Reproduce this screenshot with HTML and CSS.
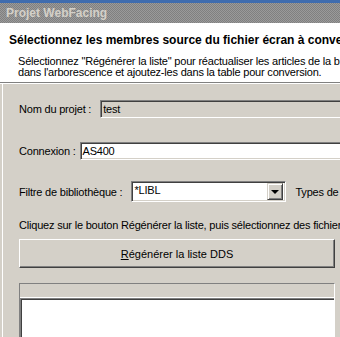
FILE: index.html
```html
<!DOCTYPE html>
<html lang="fr">
<head>
    <meta charset="UTF-8" />
    <title>Projet WebFacing</title>
    <link rel="stylesheet" href="styles.css">
</head>
<body>

<div class="window">
    <div class="caption">Projet WebFacing</div>

    <div class="banner">
        <h1>Sélectionnez les membres source du fichier écran à convertir</h1>
        <p>Sélectionnez "Régénérer la liste" pour réactualiser les articles de la bibliothèque</p>
        <p>dans l'arborescence et ajoutez-les dans la table pour conversion.</p>
    </div>

    <div class="content">
        <div class="row row-project">
            <span class="label">Nom du projet :</span>
            <div class="field disabled">test</div>
        </div>

        <div class="row row-conn">
            <span class="label">Connexion :</span>
            <div class="field">AS400</div>
        </div>

        <div class="row row-filter">
            <span class="label">Filtre de bibliothèque :</span>
            <div class="combo">
                <span class="combo-value">*LIBL</span>
                <span class="combo-arrow"></span>
            </div>
            <span class="label types">Types de membres :</span>
        </div>

        <p class="hint">Cliquez sur le bouton Régénérer la liste, puis sélectionnez des fichiers</p>

        <button class="btn" type="button"><u>R</u>égénérer la liste DDS</button>

        <div class="table-frame">
            <div class="table-head"></div>
            <div class="table-body"></div>
        </div>
    </div>
</div>

</body>
</html>
```

FILE: styles.css
```css
body {
    margin: 0;
    width: 340px;
    height: 337px;
    overflow: hidden;
    font-family: 'Liberation Sans', Arial, sans-serif;
    font-size: 11px;
    letter-spacing: -0.2px;
    color: #000;
    background: #d4d0c8;
}

.window {
    width: 460px;
    border-top: 3px solid #3f6cae;
    white-space: nowrap;
}

.caption {
    height: 20px;
    line-height: 20px;
    padding-left: 6px;
    font-weight: bold;
    font-size: 12px;
    letter-spacing: 0;
    color: #d4d0c8;
    background: repeating-conic-gradient(#808080 0 25%, #9a9a9a 0 50%) 0 0 / 2px 2px;
}

.banner {
    background: #fff;
    height: 59px;
    padding-left: 9px;
    border-bottom: 1px solid #808080;
    box-shadow: 0 1px 0 #fff;
    overflow: hidden;
}

.banner h1 {
    margin: 11px 0 9px;
    font-size: 12px;
    line-height: 13px;
    letter-spacing: 0;
}

.banner p {
    margin: 0;
    padding-left: 9px;
    line-height: 11px;
}

.content {
    border-left: 1px solid #fff;
    margin-left: 2px;
    margin-top: 1px;
    padding: 16px 0 0 16px;
    height: 260px;
}

.row {
    display: flex;
    align-items: center;
}

.row-project { gap: 9px; }
.row-conn { margin-top: 24px; gap: 4px; }
.row-filter { margin-top: 21px; gap: 6px; }

.field {
    height: 16px;
    line-height: 16px;
    width: 320px;
    padding-left: 2px;
    background: #fff;
    border: 1px solid;
    border-color: #808080 #fff #fff #808080;
    box-shadow: inset 1px 1px #404040, inset -1px -1px #d4d0c8;
}

.field.disabled {
    background: #d4d0c8;
}

.combo {
    display: flex;
    align-items: center;
    justify-content: space-between;
    width: 149px;
    height: 17px;
    margin-left: 3px;
    padding: 1px 2px;
    background: #fff;
    border: 1px solid;
    border-color: #808080 #fff #fff #808080;
    box-shadow: inset 1px 1px #404040, inset -1px -1px #d4d0c8;
}

.combo-value {
    align-self: flex-start;
    line-height: 14px;
}

.combo-arrow {
    position: relative;
    width: 14px;
    height: 15px;
    background: #d4d0c8;
    border: 1px solid;
    border-color: #d4d0c8 #404040 #404040 #d4d0c8;
    box-shadow: inset 1px 1px #fff, inset -1px -1px #808080;
}

.combo-arrow::after {
    content: "";
    position: absolute;
    left: 3px;
    top: 6px;
    border-left: 4px solid transparent;
    border-right: 4px solid transparent;
    border-top: 4px solid #000;
}

.types {
    margin-left: 3px;
}

.hint {
    margin: 16px 0 0;
    line-height: 14px;
}

.btn {
    display: block;
    margin-top: 7px;
    width: 316px;
    height: 29px;
    padding: 0;
    font: inherit;
    color: #000;
    background: #d4d0c8;
    border: 1px solid;
    border-color: #fff #404040 #404040 #fff;
    box-shadow: inset -1px -1px #808080;
}

.table-frame {
    margin-top: 15px;
    width: 314px;
    height: 60px;
    border: 1px solid;
    border-color: #808080 #fff #fff #808080;
}

.table-head {
    height: 13px;
    border-bottom: 1px solid #fff;
}

.table-body {
    height: 46px;
    background: #fff;
    border-top: 1px solid #808080;
    border-left: 1px solid #808080;
    box-shadow: inset 1px 1px #404040;
}
```
